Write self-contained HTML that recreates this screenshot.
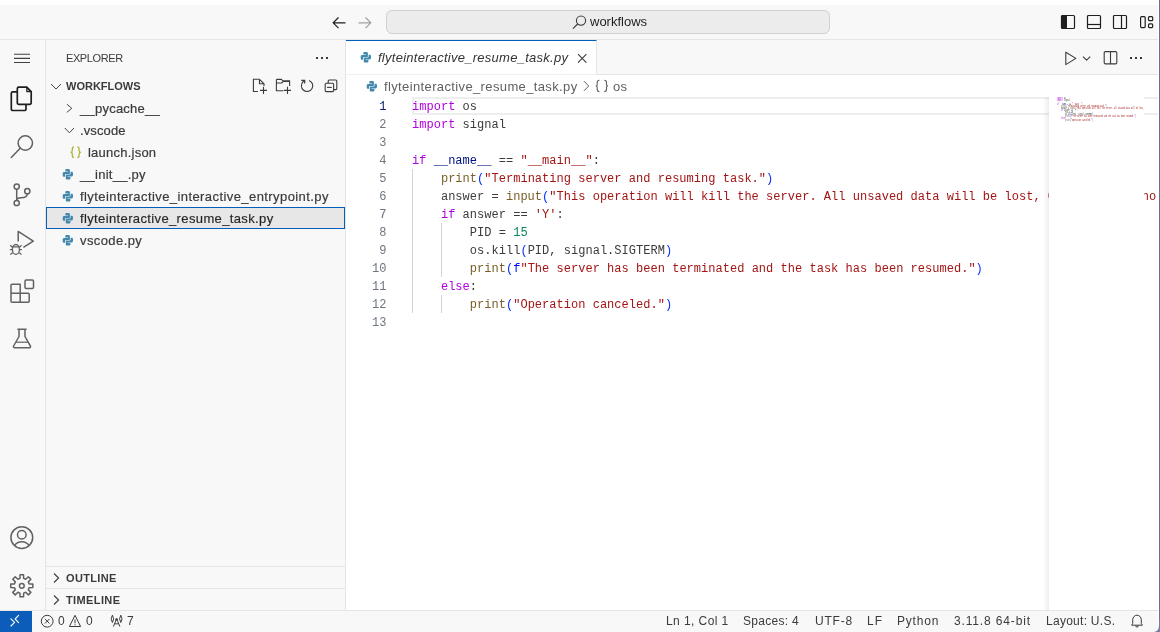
<!DOCTYPE html>
<html><head><meta charset="utf-8">
<style>
*{box-sizing:border-box;margin:0;padding:0}
html,body{width:1160px;height:632px;overflow:hidden;background:#fff;font-family:"Liberation Sans",sans-serif;color:#3b3b3b;position:relative}
svg{position:absolute;overflow:visible}
.t{position:absolute;white-space:pre}
#title{position:absolute;left:0;top:5px;width:1160px;height:35px;background:#f8f8f8;border-bottom:1px solid #e5e5e5}
#search{position:absolute;left:386px;top:10px;width:444px;height:24px;background:#ececec;border:1px solid #d0d0d0;border-radius:6px}
#act{position:absolute;left:0;top:40px;width:46px;height:570px;background:#f8f8f8;border-right:1px solid #e5e5e5}
#side{position:absolute;left:46px;top:40px;width:300px;height:570px;background:#f8f8f8;border-right:1px solid #e5e5e5}
#tabs{position:absolute;left:346px;top:40px;width:814px;height:35px;background:#f8f8f8;border-bottom:1px solid #e5e5e5}
#tab{position:absolute;left:346px;top:40px;width:251px;height:35px;background:#fff;border-top:1px solid #005fb8;border-right:1px solid #e5e5e5}
#editor{position:absolute;left:346px;top:75px;width:814px;height:535px;background:#fff}
#status{position:absolute;left:0;top:610px;width:1160px;height:22px;background:#f8f8f8;border-top:1px solid #e5e5e5}
.st{position:absolute;height:21px;line-height:21px;font-size:12px;color:#3b3b3b;white-space:pre;letter-spacing:0.15px}
.row{position:absolute;white-space:pre;-webkit-text-stroke:0.2px #3b3b3b;height:22px;line-height:22px;font-size:13px;color:#3b3b3b;letter-spacing:0.4px}
.row span{position:absolute;white-space:pre}
.code{position:absolute;font-family:"Liberation Mono",monospace;font-size:12px;white-space:pre;letter-spacing:0.024px;height:18px;line-height:18px;color:#3b3b3b}
.ln{position:absolute;font-family:"Liberation Mono",monospace;font-size:12px;height:18px;line-height:18px;color:#6e7681;text-align:right;width:40px}
.k{color:#af00db}.v{color:#001080}.s{color:#a31515}.f{color:#795e26}.b{color:#0431fa}.n{color:#098658}.bl{color:#0000ff}
.guide{position:absolute;width:1px;background:#d3d3d3}
</style></head><body><div id="root" style="position:absolute;left:0;top:0;width:1160px;height:632px;will-change:transform;overflow:hidden">
<div id="title"></div>
  <!-- back arrow -->
  <svg style="left:332px;top:15.5px" width="14" height="14" viewBox="0 0 14 14"><path d="M6.5 1.5L1.2 6.8L6.5 12.1M1.2 6.8H13.5" fill="none" stroke="#1f1f1f" stroke-width="1.2"/></svg>
  <svg style="left:358px;top:15.5px" width="14" height="14" viewBox="0 0 14 14"><path d="M7.5 1.5L12.8 6.8L7.5 12.1M12.8 6.8H0.5" fill="none" stroke="#a0a0a0" stroke-width="1.2"/></svg>
  <div id="search"></div>
  <svg style="left:571.5px;top:14.8px" width="15" height="15" viewBox="0 0 15 15"><circle cx="9" cy="5.6" r="4.6" fill="none" stroke="#3b3b3b" stroke-width="1.1"/><path d="M5.6 9L1 13.7" stroke="#3b3b3b" stroke-width="1.1"/></svg>
  <div class="t" style="left:590px;top:10px;height:24px;line-height:24px;font-size:13px;color:#1f1f1f">workflows</div>
  <!-- layout icons -->
  <svg style="left:1060px;top:14px" width="16" height="16" viewBox="0 0 16 16"><rect x="1.5" y="1.5" width="13" height="13" rx="1" fill="none" stroke="#1f1f1f" stroke-width="1.2"/><rect x="1.5" y="1.5" width="5.5" height="13" rx="1" fill="#1f1f1f"/></svg>
  <svg style="left:1086px;top:14px" width="16" height="16" viewBox="0 0 16 16"><rect x="1.5" y="1.5" width="13" height="13" rx="1" fill="none" stroke="#1f1f1f" stroke-width="1.2"/><path d="M1.5 10.5H14.5" stroke="#1f1f1f" stroke-width="1.2"/></svg>
  <svg style="left:1112px;top:14px" width="16" height="16" viewBox="0 0 16 16"><rect x="1.5" y="1.5" width="13" height="13" rx="1" fill="none" stroke="#1f1f1f" stroke-width="1.2"/><path d="M9.5 1.5V14.5" stroke="#1f1f1f" stroke-width="1.2"/></svg>
  <svg style="left:1138px;top:14px" width="16" height="16" viewBox="0 0 16 16"><rect x="2.6" y="2.7" width="4.6" height="10.9" rx="1" fill="none" stroke="#1f1f1f" stroke-width="1.2"/><rect x="10.5" y="2.7" width="4.2" height="4" rx="1" fill="none" stroke="#1f1f1f" stroke-width="1.2"/><rect x="10.5" y="9.9" width="4.2" height="3.7" rx="1" fill="none" stroke="#1f1f1f" stroke-width="1.2"/></svg>

<div id="act"></div>
<svg style="left:0;top:40px" width="46" height="570" viewBox="0 40 46 570">
 <g fill="none" stroke="#616161" stroke-width="1.1">
  <path d="M14 54.3H30M14 58.4H30M14 62.5H30" stroke="#424242"/>
 </g>
 <g fill="none" stroke="#1f1f1f" stroke-width="1.7" stroke-linejoin="round">
  <path d="M17.3 91.8H12.8a1.5 1.5 0 0 0-1.5 1.5V109a1.5 1.5 0 0 0 1.5 1.5H24.5a1.5 1.5 0 0 0 1.5-1.5V104.5"/>
  <path d="M18.8 87.2H26.8L31.2 91.6V102.8a1.5 1.5 0 0 1-1.5 1.5H18.8a1.5 1.5 0 0 1-1.5-1.5V88.7a1.5 1.5 0 0 1 1.5-1.5Z"/>
  <path d="M26.8 87.2V91.6H31.2" stroke-width="1.2" fill="#1f1f1f" fill-opacity="0.25"/>
 </g>
 <g fill="none" stroke="#616161" stroke-width="1.5">
  <circle cx="25.3" cy="143" r="7.2"/>
  <path d="M20.2 148.2L11.3 157.4" stroke-linecap="round"/>
  <circle cx="16.7" cy="186.6" r="2.6"/>
  <circle cx="16.7" cy="203" r="2.6"/>
  <circle cx="27.3" cy="191.2" r="2.6"/>
  <path d="M16.7 189.2V200.4"/>
  <path d="M27.3 193.8C27.3 197.5 24 197.8 21 197.8C18.5 197.8 16.7 198.8 16.7 200.4"/>
 </g>
 <g fill="none" stroke="#616161" stroke-width="1.5" stroke-linejoin="round">
  <path d="M18.2 241.6V231.4L33.3 241.2L23.4 247.3"/>
  <ellipse cx="15.9" cy="249.4" rx="3.5" ry="4.9" stroke-width="1.3"/>
  <path d="M12.6 246.8H19.2M12.4 247.2L10.2 245.3M12.3 249.7H9.9M12.6 252.7L10.3 254.5M19.4 247.2L21.6 245.3M19.5 249.7H21.9M19.2 252.7L21.5 254.5" stroke-width="1.3"/>
 </g>
 <g fill="none" stroke="#616161" stroke-width="1.5" stroke-linejoin="round">
  <path d="M11 293.3V285.2a1 1 0 0 1 1-1H20.2V302.2H12a1 1 0 0 1-1-1Z"/>
  <path d="M11 293.3H28.2a1 1 0 0 1 1 1V301.2a1 1 0 0 1-1 1H20.2"/>
  <rect x="25" y="280" width="8.5" height="8.5" rx="1.2"/>
 </g>
 <g fill="none" stroke="#616161" stroke-width="1.5" stroke-linejoin="round">
  <path d="M17.4 329.2H26.6M19 329.2V336.5L13.6 346a1.2 1.2 0 0 0 1 1.8H29.4a1.2 1.2 0 0 0 1-1.8L25 336.5V329.2"/>
  <path d="M16 342.2H28" stroke-width="1.2"/>
 </g>
 <g fill="none" stroke="#616161" stroke-width="1.5">
  <circle cx="21.8" cy="537.6" r="10.9"/>
  <circle cx="21.8" cy="534.8" r="4.3"/>
  <path d="M14.5 545.8a8 7 0 0 1 14.6 0"/>
 </g>
 <g fill="none" stroke="#616161" stroke-width="1.5" stroke-linejoin="round">
  <path id="gear" d="M19.96 578.43 L20.05 574.74 L23.55 574.74 L23.64 578.43 L25.71 579.29 L28.38 576.74 L30.86 579.22 L28.31 581.89 L29.17 583.96 L32.86 584.05 L32.86 587.55 L29.17 587.64 L28.31 589.71 L30.86 592.38 L28.38 594.86 L25.71 592.31 L23.64 593.17 L23.55 596.86 L20.05 596.86 L19.96 593.17 L17.89 592.31 L15.22 594.86 L12.74 592.38 L15.29 589.71 L14.43 587.64 L10.74 587.55 L10.74 584.05 L14.43 583.96 L15.29 581.89 L12.74 579.22 L15.22 576.74 L17.89 579.29Z"/>
  <circle cx="21.8" cy="585.8" r="2.4"/>
 </g>
</svg>

<div id="side"></div>
<div class="t" style="left:66px;top:51px;height:14px;line-height:14px;font-size:11px;color:#3b3b3b;letter-spacing:-0.4px">EXPLORER</div>
<svg style="left:314px;top:50px" width="16" height="16" viewBox="0 0 16 16"><g fill="#3b3b3b"><rect x="2" y="7" width="2" height="2"/><rect x="7" y="7" width="2" height="2"/><rect x="12" y="7" width="2" height="2"/></g></svg>
<svg style="left:46px;top:75px" width="300" height="22" viewBox="46 75 300 22">
 <path d="M51 84L56 89L61 84" fill="none" stroke="#3b3b3b" stroke-width="0.95"/>
 <g fill="none" stroke="#3b3b3b" stroke-width="1.1">
  <path d="M259.5 79.3H253.4V91.5H258M253.4 79.3M259.5 79.3L264 83.8V86M259.5 79.3V83.8H264"/>
  <path d="M260 90.4H267M263.5 86.8V94"/>
  <path d="M276.4 79.4H281.4L282.8 80.8H289.6V86M276.4 79.4V90.8H283.5M276.4 83H281.8L283.3 81.4H289.6"/>
  <path d="M284 90.4H291M287.5 86.8V94"/>
  <path d="M309 80.4A5.7 5.7 0 1 1 303.3 81.5L304.6 80.5" />
  <path d="M301.2 80.4H304.7V83.4" stroke-width="1.2"/>
  <rect x="325.2" y="83.2" width="8.4" height="8.4" rx="1"/>
  <path d="M328.2 83.2V81a1 1 0 0 1 1-1H335.8a1 1 0 0 1 1 1V88.6a1 1 0 0 1-1 1H333.6"/>
  <path d="M327 87.4H331.8"/>
 </g>
</svg>
<div class="t" style="left:66px;top:79px;height:14px;line-height:14px;font-size:11px;font-weight:bold;color:#3b3b3b">WORKFLOWS</div>

<div style="position:absolute;left:46px;top:207px;width:299px;height:22px;background:#e7e7e8;border:1px solid #005fb8"></div>

<svg style="left:46px;top:97px" width="300" height="154" viewBox="46 97 300 154">
 <g fill="none" stroke="#3b3b3b" stroke-width="0.95">
  <path d="M66.8 104.2L71.8 108.3L66.8 112.4"/>
  <path d="M64.8 128L69.4 132.8L74 128"/>
 </g>
 <path d="M74 146.9C72.3 146.9 72.3 147.8 72.3 149.5V150.8C72.3 151.8 71.6 152.3 70.5 152.3C71.6 152.3 72.3 152.8 72.3 153.8V155.1C72.3 156.8 72.3 157.7 74 157.7M77.4 146.9C79.1 146.9 79.1 147.8 79.1 149.5V150.8C79.1 151.8 79.8 152.3 80.9 152.3C79.8 152.3 79.1 152.8 79.1 153.8V155.1C79.1 156.8 79.1 157.7 77.4 157.7" fill="none" stroke="#b0b43a" stroke-width="1.3"/>
 <g fill="#4289ad" transform="translate(60,167)"><path d="M9.9 6.2V3.2C9.9 2.4 9.2 2 8.2 2H6.9C5.9 2 5.3 2.5 5.3 3.2V4.5H8.1V5.1H3.8C3.1 5.1 2.7 5.9 2.7 7V8.3C2.7 9.2 3.1 9.8 3.8 9.8H5.1V8.4C5.1 7.6 5.7 7.1 6.5 7.1H9C9.5 7.1 9.9 6.7 9.9 6.2Z"/><path d="M5.8 8.4V11.4C5.8 12.2 6.5 12.6 7.5 12.6H8.8C9.8 12.6 10.4 12.1 10.4 11.4V10.1H7.6V9.5H11.9C12.6 9.5 13.0 8.7 13.0 7.6V6.3C13.0 5.4 12.6 4.8 11.9 4.8H10.6V6.2C10.6 7.0 10.0 7.5 9.2 7.5H6.7C6.2 7.5 5.8 7.9 5.8 8.4Z"/></g>
 <g fill="#4289ad" transform="translate(60,189)"><path d="M9.9 6.2V3.2C9.9 2.4 9.2 2 8.2 2H6.9C5.9 2 5.3 2.5 5.3 3.2V4.5H8.1V5.1H3.8C3.1 5.1 2.7 5.9 2.7 7V8.3C2.7 9.2 3.1 9.8 3.8 9.8H5.1V8.4C5.1 7.6 5.7 7.1 6.5 7.1H9C9.5 7.1 9.9 6.7 9.9 6.2Z"/><path d="M5.8 8.4V11.4C5.8 12.2 6.5 12.6 7.5 12.6H8.8C9.8 12.6 10.4 12.1 10.4 11.4V10.1H7.6V9.5H11.9C12.6 9.5 13.0 8.7 13.0 7.6V6.3C13.0 5.4 12.6 4.8 11.9 4.8H10.6V6.2C10.6 7.0 10.0 7.5 9.2 7.5H6.7C6.2 7.5 5.8 7.9 5.8 8.4Z"/></g>
 <g fill="#4289ad" transform="translate(60,211)"><path d="M9.9 6.2V3.2C9.9 2.4 9.2 2 8.2 2H6.9C5.9 2 5.3 2.5 5.3 3.2V4.5H8.1V5.1H3.8C3.1 5.1 2.7 5.9 2.7 7V8.3C2.7 9.2 3.1 9.8 3.8 9.8H5.1V8.4C5.1 7.6 5.7 7.1 6.5 7.1H9C9.5 7.1 9.9 6.7 9.9 6.2Z"/><path d="M5.8 8.4V11.4C5.8 12.2 6.5 12.6 7.5 12.6H8.8C9.8 12.6 10.4 12.1 10.4 11.4V10.1H7.6V9.5H11.9C12.6 9.5 13.0 8.7 13.0 7.6V6.3C13.0 5.4 12.6 4.8 11.9 4.8H10.6V6.2C10.6 7.0 10.0 7.5 9.2 7.5H6.7C6.2 7.5 5.8 7.9 5.8 8.4Z"/></g>
 <g fill="#4289ad" transform="translate(60,233)"><path d="M9.9 6.2V3.2C9.9 2.4 9.2 2 8.2 2H6.9C5.9 2 5.3 2.5 5.3 3.2V4.5H8.1V5.1H3.8C3.1 5.1 2.7 5.9 2.7 7V8.3C2.7 9.2 3.1 9.8 3.8 9.8H5.1V8.4C5.1 7.6 5.7 7.1 6.5 7.1H9C9.5 7.1 9.9 6.7 9.9 6.2Z"/><path d="M5.8 8.4V11.4C5.8 12.2 6.5 12.6 7.5 12.6H8.8C9.8 12.6 10.4 12.1 10.4 11.4V10.1H7.6V9.5H11.9C12.6 9.5 13.0 8.7 13.0 7.6V6.3C13.0 5.4 12.6 4.8 11.9 4.8H10.6V6.2C10.6 7.0 10.0 7.5 9.2 7.5H6.7C6.2 7.5 5.8 7.9 5.8 8.4Z"/></g>
</svg>
<div class="row" style="left:80px;top:98px;letter-spacing:0.24px">__pycache__</div>
<div class="row" style="left:80px;top:120px;letter-spacing:0.11px">.vscode</div>
<div class="row" style="left:88px;top:142px;letter-spacing:0.23px">launch.json</div>
<div class="row" style="left:80px;top:164px;letter-spacing:0.27px">__init__.py</div>
<div class="row" style="left:80px;top:186px;letter-spacing:0.42px">flyteinteractive_interactive_entrypoint.py</div>
<div class="row" style="left:80px;top:208px;letter-spacing:0.37px;color:#1f1f1f">flyteinteractive_resume_task.py</div>
<div class="row" style="left:80px;top:230px;letter-spacing:0.41px">vscode.py</div>

<div style="position:absolute;left:46px;top:566px;width:299px;height:1px;background:#e5e5e5"></div>
<div style="position:absolute;left:46px;top:588px;width:299px;height:1px;background:#e5e5e5"></div>
<svg style="left:46px;top:566px" width="300" height="44" viewBox="46 566 300 44"><g fill="none" stroke="#3b3b3b" stroke-width="1.1"><path d="M54 573.5L58.6 578L54 582.5"/><path d="M54 595.5L58.6 600L54 604.5"/></g></svg>
<div class="t" style="left:66px;top:571px;height:14px;line-height:14px;font-size:11px;font-weight:bold;color:#3b3b3b;letter-spacing:0.35px">OUTLINE</div>
<div class="t" style="left:66px;top:593px;height:14px;line-height:14px;font-size:11px;font-weight:bold;color:#3b3b3b;letter-spacing:0.38px">TIMELINE</div>


<div id="editor"></div>
<div style="position:absolute;left:412px;top:97px;width:746px;height:18px;border:2px solid #eeeeee;border-right:none"></div>
<div class="guide" style="left:412px;top:169px;height:144px"></div>
<div class="guide" style="left:441px;top:223px;height:54px"></div>
<div class="guide" style="left:441px;top:295px;height:18px"></div>
<div class="ln" style="left:346.4px;top:98px;color:#0b216f">1</div>
<div class="code" style="left:412px;top:98px"><span class="k">import</span> os</div>
<div class="ln" style="left:346.4px;top:116px;color:#6e7681">2</div>
<div class="code" style="left:412px;top:116px"><span class="k">import</span> signal</div>
<div class="ln" style="left:346.4px;top:134px;color:#6e7681">3</div>
<div class="ln" style="left:346.4px;top:152px;color:#6e7681">4</div>
<div class="code" style="left:412px;top:152px"><span class="k">if</span> <span class="v">__name__</span> == <span class="s">"__main__"</span>:</div>
<div class="ln" style="left:346.4px;top:170px;color:#6e7681">5</div>
<div class="code" style="left:412px;top:170px">    <span class="f">print</span><span class="b">(</span><span class="s">"Terminating server and resuming task."</span><span class="b">)</span></div>
<div class="ln" style="left:346.4px;top:188px;color:#6e7681">6</div>
<div class="code" style="left:412px;top:188px">    answer = <span class="f">input</span><span class="b">(</span><span class="s">"This operation will kill the server. All unsaved data will be lost, Confirm (yes/no)? "</span><span class="b">)</span></div>
<div class="ln" style="left:346.4px;top:206px;color:#6e7681">7</div>
<div class="code" style="left:412px;top:206px">    <span class="k">if</span> answer == <span class="s">'Y'</span>:</div>
<div class="ln" style="left:346.4px;top:224px;color:#6e7681">8</div>
<div class="code" style="left:412px;top:224px">        PID = <span class="n">15</span></div>
<div class="ln" style="left:346.4px;top:242px;color:#6e7681">9</div>
<div class="code" style="left:412px;top:242px">        os.kill<span class="b">(</span>PID, signal.SIGTERM<span class="b">)</span></div>
<div class="ln" style="left:346.4px;top:260px;color:#6e7681">10</div>
<div class="code" style="left:412px;top:260px">        <span class="f">print</span><span class="b">(</span><span class="bl">f</span><span class="s">"The server has been terminated and the task has been resumed."</span><span class="b">)</span></div>
<div class="ln" style="left:346.4px;top:278px;color:#6e7681">11</div>
<div class="code" style="left:412px;top:278px">    <span class="k">else</span>:</div>
<div class="ln" style="left:346.4px;top:296px;color:#6e7681">12</div>
<div class="code" style="left:412px;top:296px">        <span class="f">print</span><span class="b">(</span><span class="s">"Operation canceled."</span><span class="b">)</span></div>
<div class="ln" style="left:346.4px;top:314px;color:#6e7681">13</div>
<div id="tabs"></div>
<div id="tab"></div>
<div style="position:absolute;left:346px;top:74px;width:251px;height:1px;background:#f0f0f0"></div>
<svg style="left:358px;top:50px" width="16" height="16" viewBox="0 0 16 16"><g fill="#4289ad"><path d="M9.9 6.2V3.2C9.9 2.4 9.2 2 8.2 2H6.9C5.9 2 5.3 2.5 5.3 3.2V4.5H8.1V5.1H3.8C3.1 5.1 2.7 5.9 2.7 7V8.3C2.7 9.2 3.1 9.8 3.8 9.8H5.1V8.4C5.1 7.6 5.7 7.1 6.5 7.1H9C9.5 7.1 9.9 6.7 9.9 6.2Z"/><path d="M5.8 8.4V11.4C5.8 12.2 6.5 12.6 7.5 12.6H8.8C9.8 12.6 10.4 12.1 10.4 11.4V10.1H7.6V9.5H11.9C12.6 9.5 13.0 8.7 13.0 7.6V6.3C13.0 5.4 12.6 4.8 11.9 4.8H10.6V6.2C10.6 7.0 10.0 7.5 9.2 7.5H6.7C6.2 7.5 5.8 7.9 5.8 8.4Z"/></g></svg>
<div class="t" style="left:378px;top:47px;height:22px;line-height:22px;font-size:13px;font-style:italic;color:#333;letter-spacing:0.26px">flyteinteractive_resume_task.py</div>
<svg style="left:574px;top:50px" width="16" height="16" viewBox="0 0 16 16"><path d="M4 4.2L12.4 12.6M12.4 4.2L4 12.6" stroke="#3b3b3b" stroke-width="1.1" fill="none"/></svg>
<svg style="left:1058px;top:50px" width="100" height="16" viewBox="0 0 100 16"><g fill="none" stroke="#3b3b3b" stroke-width="1.1" stroke-linejoin="round"><path d="M7.8 2.2V14.6L17.9 8.4Z"/><path d="M25 6.6L28.6 10.2L32.2 6.6"/><rect x="46.2" y="1.6" width="12.6" height="12.3" rx="1.2"/><path d="M52.5 1.6V13.9"/></g><g fill="#3b3b3b"><rect x="72" y="7" width="2" height="2"/><rect x="77" y="7" width="2" height="2"/><rect x="82" y="7" width="2" height="2"/></g></svg>
<svg style="left:364px;top:79px" width="16" height="16" viewBox="0 0 16 16"><g fill="#4289ad"><path d="M9.9 6.2V3.2C9.9 2.4 9.2 2 8.2 2H6.9C5.9 2 5.3 2.5 5.3 3.2V4.5H8.1V5.1H3.8C3.1 5.1 2.7 5.9 2.7 7V8.3C2.7 9.2 3.1 9.8 3.8 9.8H5.1V8.4C5.1 7.6 5.7 7.1 6.5 7.1H9C9.5 7.1 9.9 6.7 9.9 6.2Z"/><path d="M5.8 8.4V11.4C5.8 12.2 6.5 12.6 7.5 12.6H8.8C9.8 12.6 10.4 12.1 10.4 11.4V10.1H7.6V9.5H11.9C12.6 9.5 13.0 8.7 13.0 7.6V6.3C13.0 5.4 12.6 4.8 11.9 4.8H10.6V6.2C10.6 7.0 10.0 7.5 9.2 7.5H6.7C6.2 7.5 5.8 7.9 5.8 8.4Z"/></g></svg>
<div class="t" style="left:384px;top:76px;height:22px;line-height:22px;font-size:13px;color:#616161;letter-spacing:0.37px">flyteinteractive_resume_task.py</div>
<svg style="left:580px;top:76px" width="40" height="20" viewBox="580 76 40 20"><g fill="none" stroke="#616161" stroke-width="1"><path d="M583.9 81.1L588.7 86L583.9 90.9"/><path d="M599.4 80.3C597.4 80.3 597.2 81.3 597.2 82.6V84.4C597.2 85.3 596.8 85.9 595.8 85.9C596.8 85.9 597.2 86.5 597.2 87.4V89.3C597.2 90.6 597.4 91.6 599.4 91.6M604.3 80.3C606.3 80.3 606.5 81.3 606.5 82.6V84.4C606.5 85.3 606.9 85.9 607.9 85.9C606.9 85.9 606.5 86.5 606.5 87.4V89.3C606.5 90.6 606.3 91.6 604.3 91.6" stroke-width="1.1"/></g></svg>
<div class="t" style="left:613px;top:76px;height:22px;line-height:22px;font-size:13px;color:#616161;letter-spacing:0.3px">os</div>



<div style="position:absolute;left:1043px;top:97px;width:6px;height:513px;background:linear-gradient(to right,rgba(0,0,0,0),rgba(0,0,0,0.07))"></div>
<div style="position:absolute;left:1049px;top:97px;width:95px;height:513px;background:#fff"></div>
<div style="position:absolute;left:1057px;top:97px;width:156.6px;height:30px;overflow:hidden;font-family:'Liberation Mono',monospace;font-size:3px;line-height:2px;white-space:pre;color:#3b3b3b;transform:scaleX(0.5556);transform-origin:0 0;padding-top:0.5px"><span class="k">import</span> os<br><span class="k">import</span> signal<br> <br><span class="k">if</span> <span class="v">__name__</span> == <span class="s">"__main__"</span>:<br>    <span class="f">print</span><span class="b">(</span><span class="s">"Terminating server and resuming task."</span><span class="b">)</span><br>    answer = <span class="f">input</span><span class="b">(</span><span class="s">"This operation will kill the server. All unsaved data will be lost, Confirm (yes/no)? "</span><span class="b">)</span><br>    <span class="k">if</span> answer == <span class="s">'Y'</span>:<br>        PID = <span class="n">15</span><br>        os.kill<span class="b">(</span>PID, signal.SIGTERM<span class="b">)</span><br>        <span class="f">print</span><span class="b">(</span><span class="bl">f</span><span class="s">"The server has been terminated and the task has been resumed."</span><span class="b">)</span><br>    <span class="k">else</span>:<br>        <span class="f">print</span><span class="b">(</span><span class="s">"Operation canceled."</span><span class="b">)</span><br> </div>
<div id="status"></div>
<div style="position:absolute;left:0;top:611px;width:32px;height:21px;background:#0b5db9"></div>
<svg style="left:0;top:606px" width="40" height="26" viewBox="0 606 40 26"><g fill="none" stroke="#fff" stroke-width="1.1" stroke-linecap="round" stroke-linejoin="round"><path d="M10.9 618.8L14.6 622.4L10.9 626"/><path d="M18.6 615.4L15.1 619L18.6 622.6"/></g></svg>
<svg style="left:36px;top:611px" width="100" height="21" viewBox="36 611 100 21"><g fill="none" stroke="#3b3b3b" stroke-width="1"><circle cx="47.2" cy="621.2" r="5.9"/><path d="M44.9 618.9L49.5 623.5M49.5 618.9L44.9 623.5"/><path d="M75 615.3L69.4 626.5H80.6Z" stroke-linejoin="round"/><path d="M75 619.5V623.3M75 624.3V625.3"/>
<path d="M116.6 618.6L113.4 626.6M116.6 618.6L119.9 626.6M114.6 623.8H118.6"/><circle cx="116.6" cy="619.4" r="1.2" fill="#3b3b3b" stroke="none"/><path d="M112.4 615.2Q109.9 618.8 112.4 622.5M112.4 615.2Q114.9 618.8 112.4 622.5M120.8 615.2Q118.3 618.8 120.8 622.5M120.8 615.2Q123.3 618.8 120.8 622.5" stroke-width="1"/></g></svg>
<div class="st" style="left:58px;top:611px">0</div>
<div class="st" style="left:86px;top:611px">0</div>
<div class="st" style="left:127px;top:611px">7</div>
<div class="st" style="left:666px;top:611px;letter-spacing:0.42px">Ln 1, Col 1</div>
<div class="st" style="left:743px;top:611px;letter-spacing:0.29px">Spaces: 4</div>
<div class="st" style="left:815px;top:611px;letter-spacing:0.8px">UTF-8</div>
<div class="st" style="left:867px;top:611px;letter-spacing:1px">LF</div>
<div class="st" style="left:897px;top:611px;letter-spacing:0.8px">Python</div>
<div class="st" style="left:954px;top:611px;letter-spacing:0.85px">3.11.8 64-bit</div>
<div class="st" style="left:1046px;top:611px;letter-spacing:0.27px">Layout: U.S.</div>
<svg style="left:1128px;top:612px" width="18" height="18" viewBox="0 0 18 18"><g fill="none" stroke="#3b3b3b" stroke-width="1" stroke-linejoin="round"><path d="M3.6 13.2H14.4L13.3 11.6V7.8a4.3 4.6 0 0 0-8.6 0V11.6Z"/><path d="M7.6 13.6a1.4 1.4 0 0 0 2.8 0"/></g></svg>
<div style="position:absolute;left:1158px;top:0;width:1px;height:632px;background:#fff"></div>
<div style="position:absolute;left:1159px;top:0;width:1px;height:632px;background:#6d6d95"></div>

<svg style="left:1148px;top:620px" width="12" height="12" viewBox="1148 620 12 12"><path d="M1158.5 620V624.5Q1158.5 630.5 1152.5 631V632H1160V620Z" fill="#fff"/><path d="M1159 620V625Q1159 631.3 1154 632H1160V620Z" fill="#7a7aa2"/></svg>
</div></body></html>
